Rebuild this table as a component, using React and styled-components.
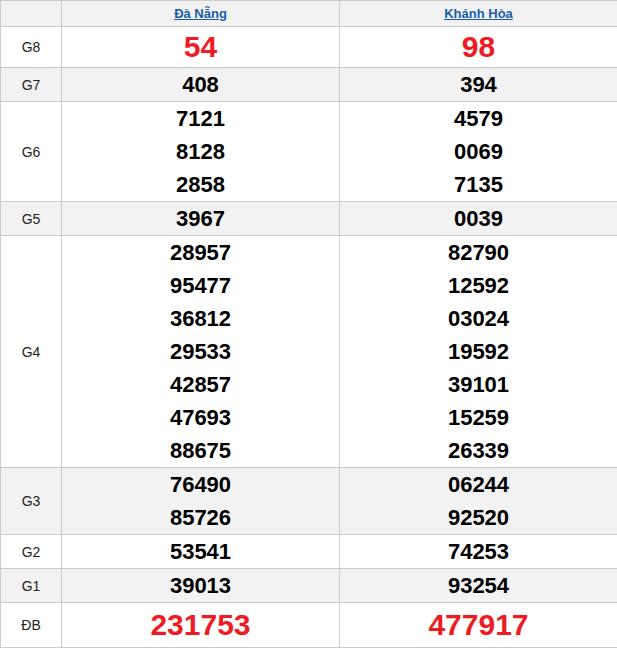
import React from "react";
import styled, { createGlobalStyle } from "styled-components";

const Global = createGlobalStyle`
  html, body { margin: 0; padding: 0; background: #fff; overflow: hidden; }
  body { font-family: "Liberation Sans", Arial, sans-serif; }
`;

const Board = styled.div`
  width: 618px;
  border-top: 1px solid #cccccc;
  border-left: 1px solid #cccccc;
  font-family: "Liberation Sans", Arial, sans-serif;
`;

const Row = styled.div`
  display: grid;
  grid-template-columns: 61px 278px 278px;
  background: ${(p) => (p.$shade ? "#f2f2f2" : "#ffffff")};
`;

const Cell = styled.div`
  border-right: 1px solid #cccccc;
  border-bottom: 1px solid #cccccc;
  display: flex;
  flex-direction: column;
  align-items: center;
  justify-content: center;
  min-height: ${(p) => p.$h || 33}px;
`;

const Label = styled(Cell)`
  font-size: 14px;
  color: #222;
`;

const HeadLink = styled.a`
  font-size: 13px;
  font-weight: bold;
  color: #1a5ca8;
  text-decoration: underline;
`;

const Num = styled.div`
  font-weight: bold;
  text-align: center;
  font-size: ${(p) => (p.$big ? 30 : 22)}px;
  line-height: ${(p) => (p.$big ? "inherit" : "33px")};
  color: ${(p) => (p.$big ? "#ed1c24" : "#000")};
`;

const rows = [
  { label: "G8", h: 40, big: true, a: ["54"], b: ["98"] },
  { label: "G7", a: ["408"], b: ["394"] },
  { label: "G6", a: ["7121", "8128", "2858"], b: ["4579", "0069", "7135"] },
  { label: "G5", a: ["3967"], b: ["0039"] },
  {
    label: "G4",
    a: ["28957", "95477", "36812", "29533", "42857", "47693", "88675"],
    b: ["82790", "12592", "03024", "19592", "39101", "15259", "26339"],
  },
  { label: "G3", a: ["76490", "85726"], b: ["06244", "92520"] },
  { label: "G2", a: ["53541"], b: ["74253"] },
  { label: "G1", a: ["39013"], b: ["93254"] },
  { label: "ĐB", h: 44, big: true, a: ["231753"], b: ["477917"] },
];

export default function App() {
  return (
    <>
      <Global />
      <Board>
        <Row $shade>
          <Cell $h={25} />
          <Cell $h={25}>
            <HeadLink href="#">Đà Nẵng</HeadLink>
          </Cell>
          <Cell $h={25}>
            <HeadLink href="#">Khánh Hòa</HeadLink>
          </Cell>
        </Row>
        {rows.map((r, i) => {
          const h = r.h || 33 * r.a.length;
          return (
            <Row key={r.label} $shade={i % 2 === 1}>
              <Label $h={h}>{r.label}</Label>
              <Cell $h={h}>
                {r.a.map((n, j) => (
                  <Num key={j} $big={r.big}>{n}</Num>
                ))}
              </Cell>
              <Cell $h={h}>
                {r.b.map((n, j) => (
                  <Num key={j} $big={r.big}>{n}</Num>
                ))}
              </Cell>
            </Row>
          );
        })}
      </Board>
    </>
  );
}
